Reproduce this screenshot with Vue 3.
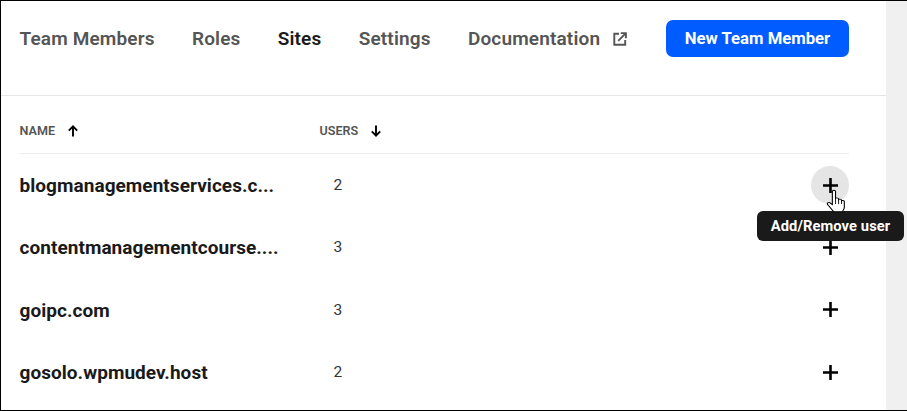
<template>
  <div class="frame">
    <div class="panel">
      <header class="topbar">
        <nav class="tabs">
          <a v-for="tab in tabs" :key="tab.label" class="tab" :class="{ active: tab.active }">
            {{ tab.label }}
            <svg v-if="tab.external" class="ext" viewBox="0 0 14 14" fill="none" stroke="currentColor" stroke-width="1.9">
              <path d="M6 1.8H1.300v10.900h10.900V8" />
              <path d="M5.200 8.800 12.400 1.600M7.800 1.100h5.100v5.100" />
            </svg>
          </a>
        </nav>
        <button type="button" class="btn-new">New Team Member</button>
      </header>

      <div class="table">
        <div class="head">
          <div class="col-name">
            NAME
            <svg class="sort" viewBox="0 0 12 12" fill="none" stroke="currentColor" stroke-width="1.900">
              <path d="M6 11.500V1.500M1.800 5.600 6 1.400l4.200 4.200" />
            </svg>
          </div>
          <div class="col-users">
            USERS
            <svg class="sort" viewBox="0 0 12 12" fill="none" stroke="currentColor" stroke-width="1.900">
              <path d="M6 .5v10M1.800 6.400 6 10.600l4.200-4.200" />
            </svg>
          </div>
        </div>

        <div v-for="(site, i) in sites" :key="site.name" class="row">
          <div class="site">{{ site.name }}</div>
          <div class="count">{{ site.users }}</div>
          <div class="action">
            <span class="add" :class="{ hover: i === 0 }">
              <svg viewBox="0 0 14 14" fill="none" stroke="#000" stroke-width="2.400">
                <path d="M7 0v14M0 7h14" />
              </svg>
            </span>
            <template v-if="i === 0">
              <span class="tooltip">Add/Remove user</span>
              <svg class="cursor" viewBox="0 0 18 25" preserveAspectRatio="none">
                <path d="M5.200 2.400c0-1.600 2.600-1.600 2.600 0v7.400c0-1.200 2.500-1.200 2.500.2v1c0-1.200 2.400-1.200 2.400.2v1c0-1.100 2.300-1 2.300.4v5.300c0 2.300-1 3.300-1.700 4.800H6.300L1.300 15.500c-.9-1.300.8-2.700 2-1.600l1.900 1.800z" fill="#fff" stroke="#000" stroke-width=".9" stroke-linejoin="round" />
                <path d="M7.800 10v5M10.300 11v4M12.700 12v3" fill="none" stroke="#000" stroke-width=".8" />
              </svg>
            </template>
          </div>
        </div>
      </div>
    </div>
  </div>
</template>

<script setup>
const tabs = [
  { label: 'Team Members' },
  { label: 'Roles' },
  { label: 'Sites', active: true },
  { label: 'Settings' },
  { label: 'Documentation', external: true }
]

const sites = [
  { name: 'blogmanagementservices.c...', users: 2 },
  { name: 'contentmanagementcourse....', users: 3 },
  { name: 'goipc.com', users: 3 },
  { name: 'gosolo.wpmudev.host', users: 2 }
]
</script>

<style>
html,
body {
  margin: 0;
  background: #fff;
}
</style>

<style scoped>
.frame {
  box-sizing: border-box;
  width: 907px;
  height: 411px;
  overflow: hidden;
  border: 1px solid #000;
  border-right: 0;
  background: #f0f0f0;
  font-family: Roboto, "Liberation Sans", sans-serif;
}

.panel {
  width: 885px;
  height: 100%;
  background: #fff;
}

.topbar {
  box-sizing: border-box;
  height: 95px;
  padding: 19px 37px 0 18.500px;
  display: flex;
  align-items: flex-start;
  justify-content: space-between;
  border-bottom: 1px solid #e6e6e6;
}

.tabs {
  display: flex;
  gap: 37.300px;
  height: 37px;
  align-items: center;
}

.tab {
  display: flex;
  align-items: center;
  font-size: 19px;
  font-weight: 600;
  letter-spacing: .15px;
  color: #555;
}

.tab.active {
  color: #1a1a1a;
}

.ext {
  width: 14px;
  height: 14px;
  margin-left: 12.500px;
}

.btn-new {
  width: 183px;
  height: 37px;
  padding: 0;
  border: none;
  border-radius: 7px;
  background: #005cff;
  color: #fff;
  font-family: inherit;
  font-size: 16.700px;
  font-weight: 700;
}

.table {
  margin: 0 37px 0 18px;
}

.head {
  box-sizing: border-box;
  height: 58px;
  padding-top: 12px;
  display: flex;
  align-items: center;
  border-bottom: 1px solid #eee;
  font-size: 12.600px;
  font-weight: 600;
  color: #555;
}

.col-name {
  width: 300.500px;
  display: flex;
  align-items: center;
  padding-left: .5px;
  box-sizing: border-box;
}

.col-users {
  display: flex;
  align-items: center;
}

.sort {
  width: 12px;
  height: 12px;
  margin-left: 12px;
  color: #000;
}

.row {
  height: 62.300px;
  display: flex;
  align-items: center;
}

.site {
  width: 262px;
  padding-left: .5px;
  padding-top: 1px;
  box-sizing: border-box;
  font-size: 19px;
  font-weight: 700;
  letter-spacing: .05px;
  color: #1a1a1a;
  white-space: nowrap;
}

.count {
  margin-left: 52.500px;
  font-size: 15.500px;
  color: #333;
}

.action {
  position: relative;
  margin-left: auto;
}

.add {
  display: flex;
  align-items: center;
  justify-content: center;
  width: 38px;
  height: 38px;
  border-radius: 50%;
}

.add.hover {
  background: #e5e5e5;
}

.add svg {
  width: 15px;
  height: 15px;
}

.tooltip {
  position: absolute;
  z-index: 2;
  top: 45px;
  right: -55px;
  width: 147px;
  height: 30px;
  display: flex;
  align-items: center;
  justify-content: center;
  border-radius: 6px;
  background: #1a1a1a;
  color: #fff;
  font-size: 14.700px;
  font-weight: 700;
  letter-spacing: .1px;
  white-space: nowrap;
}

.cursor {
  position: absolute;
  z-index: 3;
  top: 23px;
  left: 15px;
  width: 22px;
  height: 25px;
}
</style>
